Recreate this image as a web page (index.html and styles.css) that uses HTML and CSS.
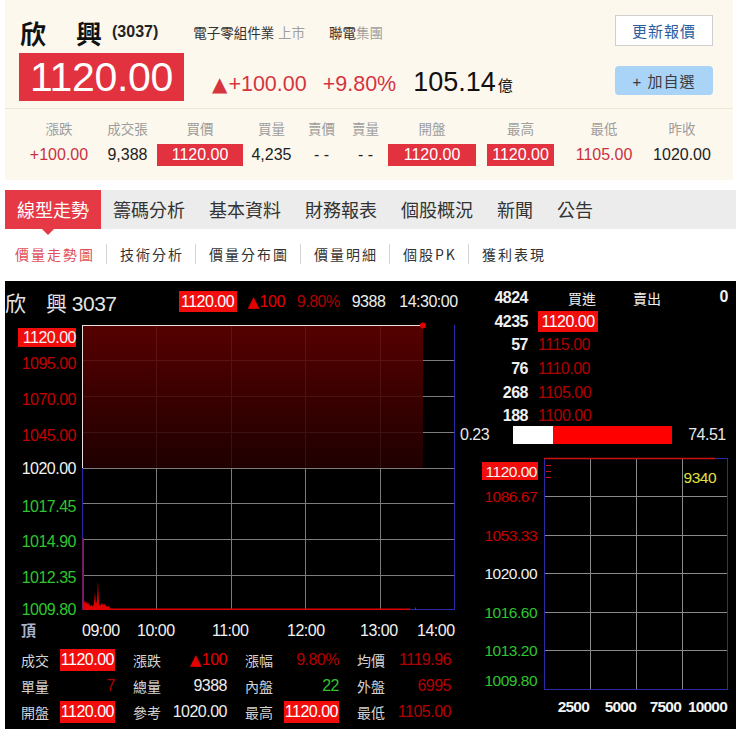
FILE: index.html
```html
<!DOCTYPE html>
<html lang="zh-Hant">
<head>
<meta charset="utf-8">
<title>欣興 3037</title>
<link rel="stylesheet" href="styles.css">
</head>
<body>
<div class="quote">
  <div class="quote-top">
    <div class="quote-main">
      <div class="title-row">
        <span class="name">欣　興</span>
        <span class="code">(3037)</span>
        <span class="industry">電子零組件業 <span class="muted">上市</span></span>
        <span class="group">聯電<span class="muted">集團</span></span>
      </div>
      <div class="price-row">
        <span class="price">1120.00</span>
        <span class="chg"><span class="tri">▲</span>+100.00</span>
        <span class="pct">+9.80%</span>
        <span class="amount">105.14<small>億</small></span>
      </div>
    </div>
    <div class="actions">
      <button class="btn btn-refresh">更新報價</button>
      <button class="btn btn-add">+ 加自選</button>
    </div>
  </div>
  <div class="stats">
    <div class="stat"><span class="lbl">漲跌</span><span class="val up">+100.00</span></div>
    <div class="stat"><span class="lbl">成交張</span><span class="val">9,388</span></div>
    <div class="stat"><span class="lbl">買價</span><span class="val box">1120.00</span></div>
    <div class="stat"><span class="lbl">買量</span><span class="val">4,235</span></div>
    <div class="stat"><span class="lbl">賣價</span><span class="val">- -</span></div>
    <div class="stat"><span class="lbl">賣量</span><span class="val">- -</span></div>
    <div class="stat"><span class="lbl">開盤</span><span class="val box">1120.00</span></div>
    <div class="stat"><span class="lbl">最高</span><span class="val box narrow">1120.00</span></div>
    <div class="stat"><span class="lbl">最低</span><span class="val up">1105.00</span></div>
    <div class="stat"><span class="lbl">昨收</span><span class="val">1020.00</span></div>
  </div>
</div>

<nav class="tabs">
  <a class="tab active">線型走勢</a>
  <a class="tab">籌碼分析</a>
  <a class="tab">基本資料</a>
  <a class="tab">財務報表</a>
  <a class="tab">個股概況</a>
  <a class="tab">新聞</a>
  <a class="tab">公告</a>
</nav>

<nav class="subtabs">
  <a class="sub active">價量走勢圖</a><span class="sep"></span>
  <a class="sub">技術分析</a><span class="sep"></span>
  <a class="sub">價量分布圖</a><span class="sep"></span>
  <a class="sub">價量明細</a><span class="sep"></span>
  <a class="sub">個股PK</a><span class="sep"></span>
  <a class="sub">獲利表現</a>
</nav>

<section class="chart">
  <div class="chart-left">
    <div class="chart-head">
      <span class="ch-name">欣　興 3037</span>
      <span class="ch-price">1120.00</span>
      <span class="ch-chg"><span class="tri-s">▲</span>100</span>
      <span class="ch-pct">9.80%</span>
      <span class="ch-vol">9388</span>
      <span class="ch-time">14:30:00</span>
    </div>
    <svg class="plot-main" width="455" height="323" viewBox="5 322 455 323">
      <defs>
        <linearGradient id="redFill" x1="0" y1="0" x2="0" y2="1">
          <stop offset="0" stop-color="#640000"/>
          <stop offset="1" stop-color="#240000"/>
        </linearGradient>
      </defs>
      <g class="grid">
        <line x1="82" y1="360.5" x2="455" y2="360.5"/>
        <line x1="82" y1="396.5" x2="455" y2="396.5"/>
        <line x1="82" y1="432.5" x2="455" y2="432.5"/>
        <line x1="82" y1="468.5" x2="455" y2="468.5"/>
        <line x1="82" y1="503.5" x2="455" y2="503.5"/>
        <line x1="82" y1="539.5" x2="455" y2="539.5"/>
        <line x1="82" y1="575.5" x2="455" y2="575.5"/>
        <line x1="156.5" y1="325" x2="156.5" y2="610"/>
        <line x1="231.5" y1="325" x2="231.5" y2="610"/>
        <line x1="305.5" y1="325" x2="305.5" y2="610"/>
        <line x1="380.5" y1="325" x2="380.5" y2="610"/>
      </g>
      <rect class="area" x="82" y="325" width="341" height="143"/>
      <g class="frame-blue">
        <line x1="82.5" y1="468" x2="82.5" y2="610"/>
        <line x1="454.5" y1="325" x2="454.5" y2="610"/>
        <line x1="82" y1="609.5" x2="455" y2="609.5"/>
      </g>
      <g class="frame-white">
        <line x1="82.5" y1="325" x2="82.5" y2="468"/>
        <line x1="82" y1="325.5" x2="423" y2="325.5"/>
      </g>
      <circle class="dot" cx="423" cy="325.5" r="3"/>
      <rect class="vol" x="82.6" y="538" width="1.4" height="72"/>
      <path class="vol" d="M84,610 L84,603 L85,600 L86,604 L87,601 L88,605 L89,602 L90,606 L92,605 L93,607 L94,603 L95,592 L96,604 L97,600 L98,581 L99,603 L100,606 L102,603 L103,605 L105,604 L107,607 L109,606 L110,608.4 L410,608.4 L410,610 Z"/>
      <rect class="vol" x="415" y="607.5" width="1" height="2.5"/>

      <rect class="lbl-box" x="18" y="328" width="58" height="19"/>
      <text class="ax w" x="76" y="343" text-anchor="end">1120.00</text>
      <text class="ax r" x="76" y="369" text-anchor="end">1095.00</text>
      <text class="ax r" x="76" y="405" text-anchor="end">1070.00</text>
      <text class="ax r" x="76" y="441" text-anchor="end">1045.00</text>
      <text class="ax w" x="76" y="474" text-anchor="end">1020.00</text>
      <text class="ax g" x="76" y="512" text-anchor="end">1017.45</text>
      <text class="ax g" x="76" y="547" text-anchor="end">1014.90</text>
      <text class="ax g" x="76" y="583" text-anchor="end">1012.35</text>
      <text class="ax g" x="76" y="615" text-anchor="end">1009.80</text>

      <text class="top-lbl" x="21" y="636">頂</text>
      <text class="ax w" x="82" y="636">09:00</text>
      <text class="ax w" x="137" y="636">10:00</text>
      <text class="ax w" x="212" y="636">11:00</text>
      <text class="ax w" x="287" y="636">12:00</text>
      <text class="ax w" x="360" y="636">13:00</text>
      <text class="ax w" x="417" y="636">14:00</text>
    </svg>
    <div class="summary">
      <div class="cell"><span class="k">成交</span><span class="v box">1120.00</span></div>
      <div class="cell"><span class="k">漲跌</span><span class="v hi"><span class="tri-s">▲</span>100</span></div>
      <div class="cell"><span class="k">漲幅</span><span class="v dr">9.80%</span></div>
      <div class="cell"><span class="k">均價</span><span class="v dr">1119.96</span></div>
      <div class="cell"><span class="k">單量</span><span class="v dr">7</span></div>
      <div class="cell"><span class="k">總量</span><span class="v">9388</span></div>
      <div class="cell"><span class="k">內盤</span><span class="v gr">22</span></div>
      <div class="cell"><span class="k">外盤</span><span class="v dr">6995</span></div>
      <div class="cell"><span class="k">開盤</span><span class="v box">1120.00</span></div>
      <div class="cell"><span class="k">參考</span><span class="v">1020.00</span></div>
      <div class="cell"><span class="k">最高</span><span class="v box">1120.00</span></div>
      <div class="cell"><span class="k">最低</span><span class="v dr">1105.00</span></div>
    </div>
  </div>

  <div class="chart-right">
    <div class="book">
      <div class="book-row">
        <span class="qty">4824</span>
        <span class="side buy">買進</span>
        <span class="sell"><span class="side">賣出</span><span class="qty">0</span></span>
      </div>
      <div class="book-row"><span class="qty">4235</span><span class="px box">1120.00</span></div>
      <div class="book-row"><span class="qty">57</span><span class="px">1115.00</span></div>
      <div class="book-row"><span class="qty">76</span><span class="px">1110.00</span></div>
      <div class="book-row"><span class="qty">268</span><span class="px">1105.00</span></div>
      <div class="book-row"><span class="qty">188</span><span class="px">1100.00</span></div>
    </div>
    <div class="ratio">
      <span class="ratio-num">0.23</span>
      <span class="bar"><span class="bar-w"></span><span class="bar-r"></span></span>
      <span class="ratio-num right">74.51</span>
    </div>
    <svg class="plot-dist" width="276" height="285" viewBox="460 444 276 285">
      <g class="grid2">
        <line x1="544" y1="496.5" x2="728" y2="496.5"/>
        <line x1="544" y1="535.5" x2="728" y2="535.5"/>
        <line x1="544" y1="573.5" x2="728" y2="573.5"/>
        <line x1="544" y1="612.5" x2="728" y2="612.5"/>
        <line x1="544" y1="650.5" x2="728" y2="650.5"/>
        <line x1="590.5" y1="458" x2="590.5" y2="689"/>
        <line x1="636.5" y1="458" x2="636.5" y2="689"/>
        <line x1="682.5" y1="458" x2="682.5" y2="689"/>
      </g>
      <g class="frame-blue">
        <line x1="544.5" y1="458" x2="544.5" y2="690"/>
        <line x1="727.5" y1="458" x2="727.5" y2="690"/>
        <line x1="544" y1="689.5" x2="728" y2="689.5"/>
        <line x1="715" y1="458.5" x2="728" y2="458.5"/>
      </g>
      <line class="redline" x1="544" y1="458.5" x2="715" y2="458.5"/>
      <g class="ticks">
        <line x1="546" y1="465.5" x2="551" y2="465.5"/>
        <line x1="546" y1="471.5" x2="551" y2="471.5"/>
        <line x1="546" y1="477.5" x2="551" y2="477.5"/>
      </g>
      <rect class="lbl-box" x="482" y="462" width="56" height="18"/>
      <text class="ax2 w" x="537" y="477" text-anchor="end">1120.00</text>
      <text class="ax2 r" x="537" y="502" text-anchor="end">1086.67</text>
      <text class="ax2 r" x="537" y="541" text-anchor="end">1053.33</text>
      <text class="ax2 w" x="537" y="579" text-anchor="end">1020.00</text>
      <text class="ax2 g" x="537" y="618" text-anchor="end">1016.60</text>
      <text class="ax2 g" x="537" y="656" text-anchor="end">1013.20</text>
      <text class="ax2 g" x="537" y="686" text-anchor="end">1009.80</text>
      <text class="ax2 y" x="716" y="483" text-anchor="end">9340</text>
      <text class="ax2 w b" x="589" y="712" text-anchor="end">2500</text>
      <text class="ax2 w b" x="636" y="712" text-anchor="end">5000</text>
      <text class="ax2 w b" x="681" y="712" text-anchor="end">7500</text>
      <text class="ax2 w b" x="727" y="712" text-anchor="end">10000</text>
    </svg>
  </div>
</section>
</body>
</html>
```

FILE: styles.css
```css
* { box-sizing: border-box; }

body {
  margin: 0;
  width: 736px;
  overflow: hidden;
  background: #fff;
  color: #222;
  font-family: "Liberation Sans", "Noto Sans CJK TC", sans-serif;
}

/* ---------- quote header ---------- */
.quote {
  margin-left: 5px;
  width: 728px;
  background: #fcf8ee;
}

.quote-top {
  display: flex;
  justify-content: space-between;
  height: 109px;
  padding: 14px 20px 0 14px;
  border-bottom: 1px solid #efe7d6;
}

.title-row {
  display: flex;
  align-items: center;
  height: 36px;
  padding-left: 1px;
}

.name {
  font-family: "Noto Sans CJK TC", sans-serif;
  font-size: 26px;
  font-weight: bold;
  letter-spacing: 2px;
  color: #111;
}

.code {
  margin-left: 8px;
  font-size: 16px;
  font-weight: bold;
  color: #222;
}

.industry, .group {
  font-size: 13.5px;
  color: #333;
}

.industry { margin-left: 35px; }
.group { margin-left: 24px; }
.muted { color: #a0a0a0; }

.price-row {
  display: flex;
  align-items: baseline;
  margin-top: 3px;
  height: 48px;
}

.price {
  width: 165px;
  height: 48px;
  line-height: 48px;
  text-align: center;
  background: #e2323f;
  color: #fff;
  font-size: 41px;
  letter-spacing: -0.3px;
}

.chg, .pct {
  font-size: 21.5px;
  color: #d6343f;
}

.chg { margin-left: 28px; }

.tri {
  font-family: "DejaVu Sans", sans-serif;
  font-size: 20px;
  margin-right: 1px;
}

.pct { margin-left: 16px; }

.amount {
  margin-left: 17px;
  font-size: 27px;
  color: #111;
}

.amount small {
  font-size: 15px;
  margin-left: 2px;
}

.actions {
  display: flex;
  flex-direction: column;
  width: 98px;
}

.btn {
  font-family: "Liberation Sans", "Noto Sans CJK TC", sans-serif;
  font-size: 15px;
  padding: 0;
  cursor: pointer;
}

.btn-refresh {
  margin-top: 1px;
  height: 31px;
  background: #fff;
  border: 1px solid #cfcfcf;
  color: #2c5e9f;
  letter-spacing: 1px;
}

.btn-add {
  margin-top: 20px;
  height: 29px;
  background: #a9d3f7;
  border: none;
  border-radius: 4px;
  color: #3a3a3a;
  letter-spacing: 1px;
}

/* ---------- stats row ---------- */
.stats {
  display: flex;
  padding: 12px 0 14px 15px;
}

.stat {
  display: flex;
  flex-direction: column;
  align-items: center;
  gap: 5px;
}

.stat:nth-child(1) { width: 78px; }
.stat:nth-child(2) { width: 59px; }
.stat:nth-child(3) { width: 86px; }
.stat:nth-child(4) { width: 57px; }
.stat:nth-child(5) { width: 43px; }
.stat:nth-child(6) { width: 45px; }
.stat:nth-child(7) { width: 88px; }
.stat:nth-child(8) { width: 89px; }
.stat:nth-child(9) { width: 78px; }
.stat:nth-child(10) { width: 78px; }

.lbl {
  font-size: 13.5px;
  line-height: 18px;
  color: #9d9d9d;
}

.val {
  font-size: 16px;
  line-height: 22px;
  height: 22px;
  color: #222;
  white-space: nowrap;
}

.val.up { color: #c8323f; }

.val.box {
  align-self: stretch;
  text-align: center;
  background: #e2323f;
  color: #fff;
}

.val.box.narrow {
  align-self: center;
  padding: 0 5px;
}

/* ---------- tabs ---------- */
.tabs {
  display: flex;
  margin: 10px 0 0 5px;
  height: 39px;
  background: #ececec;
}

.tab {
  padding: 0 12px;
  font-family: "Noto Sans CJK TC", sans-serif;
  font-size: 18px;
  line-height: 39px;
  color: #333;
}

.tab.active {
  position: relative;
  background: #e63946;
  color: #fff;
}

.tab.active::after {
  content: "";
  position: absolute;
  left: 37px;
  top: 100%;
  border-left: 6px solid transparent;
  border-right: 6px solid transparent;
  border-top: 6px solid #e63946;
}

.subtabs {
  display: flex;
  align-items: center;
  margin: 11px 0 0 15px;
  height: 28px;
}

.sub {
  font-family: "Noto Sans CJK TC", sans-serif;
  font-size: 14px;
  letter-spacing: 2px;
  color: #333;
}

.sub.active { color: #e0505a; }

.sep {
  width: 1px;
  height: 20px;
  margin: 0 13px 0 11px;
  background: #d4d4d4;
}

/* ---------- chart panel ---------- */
.chart {
  display: grid;
  grid-template-columns: 455px 276px;
  margin: 13px 0 0 5px;
  height: 448px;
  background: #000;
  color: #e8e8e8;
  font-size: 16px;
  letter-spacing: -0.5px;
}

.chart-left, .chart-right {
  display: flex;
  flex-direction: column;
}

.chart-head {
  display: flex;
  align-items: center;
  height: 41px;
  white-space: nowrap;
}

.ch-name {
  font-size: 21px;
  color: #e6e6e6;
}

.ch-price {
  margin-left: 62px;
  width: 58px;
  height: 21px;
  line-height: 21px;
  text-align: center;
  background: #f20d0d;
  color: #fff;
}

.tri-s {
  font-family: "DejaVu Sans", sans-serif;
  font-size: 15px;
  margin-right: 1px;
}

.ch-chg { margin-left: 11px; color: #e60000; }
.ch-pct { margin-left: 12px; color: #b00000; }
.ch-vol { margin-left: 12px; color: #eee; }
.ch-time { margin-left: 14px; color: #eee; }

.plot-main, .plot-dist { display: block; }

.grid line { stroke: #7c7c7c; stroke-width: 1; }
.grid2 line { stroke: #8a8a8a; stroke-width: 1; }
.area { fill: url(#redFill); fill-opacity: 0.86; }
.frame-blue line { stroke: #2a2aa6; stroke-width: 1; }
.frame-white line { stroke: #e8e0e0; stroke-width: 1; }
.dot { fill: #e00000; }
.vol { fill: #e00000; }
.redline { stroke: #cc1010; stroke-width: 1.5; }
.ticks line { stroke: #d01010; stroke-width: 1; }
.lbl-box { fill: #f20d0d; }

.ax, .ax2 {
  font-family: "Liberation Sans", sans-serif;
  font-size: 16px;
  letter-spacing: -0.5px;
}

.ax2 { font-size: 15.5px; }
.ax2.b { font-weight: bold; letter-spacing: -0.8px; }

.w { fill: #f2f2f2; }
.r { fill: #c40000; }
.g { fill: #2fc52f; }
.y { fill: #e2e040; }

.top-lbl {
  font-family: "Noto Sans CJK TC", sans-serif;
  font-size: 15px;
  font-weight: bold;
  fill: #a7b2cf;
}

.summary {
  display: grid;
  grid-template-columns: repeat(4, 94px);
  grid-auto-rows: 26px;
  column-gap: 18px;
  align-items: center;
  padding: 2px 0 0 16px;
}

.cell {
  display: flex;
  justify-content: space-between;
  align-items: center;
}

.k {
  font-family: "Noto Sans CJK TC", sans-serif;
  font-size: 14px;
  letter-spacing: 0;
  color: #d4d4d4;
}

.v {
  font-size: 16px;
  color: #eee;
  white-space: nowrap;
}

.v.box {
  height: 22px;
  line-height: 22px;
  padding: 0 1px;
  background: #f20d0d;
  color: #fff;
}

.v.dr { color: #b40000; }
.v.hi { color: #e60000; }
.v.gr { color: #2fc52f; }

/* order book */
.book { padding-top: 5px; }

.book-row {
  display: grid;
  grid-template-columns: 68px 60px 1fr;
  column-gap: 10px;
  height: 23.7px;
  align-items: center;
}

.qty {
  text-align: right;
  font-weight: bold;
  color: #f0f0f0;
}

.side {
  font-family: "Noto Sans CJK TC", sans-serif;
  font-size: 14px;
  letter-spacing: 0;
  color: #eee;
}

.side.buy {
  text-align: right;
  padding-right: 2px;
}

.sell {
  display: flex;
  justify-content: space-between;
  padding: 0 8px 0 25px;
}

.px {
  color: #b00000;
  white-space: nowrap;
}

.px.box {
  height: 21px;
  line-height: 21px;
  background: #f20d0d;
  color: #fff;
  text-align: center;
}

.ratio {
  display: flex;
  align-items: center;
  height: 18px;
  margin-top: -2px;
}

.ratio-num { color: #e8e8e8; }
.ratio-num.right { margin-left: 16px; }

.bar {
  display: flex;
  margin-left: 24px;
  height: 18px;
}

.bar-w { width: 40px; background: #fff; }
.bar-r { width: 119px; background: #f00; }
```
